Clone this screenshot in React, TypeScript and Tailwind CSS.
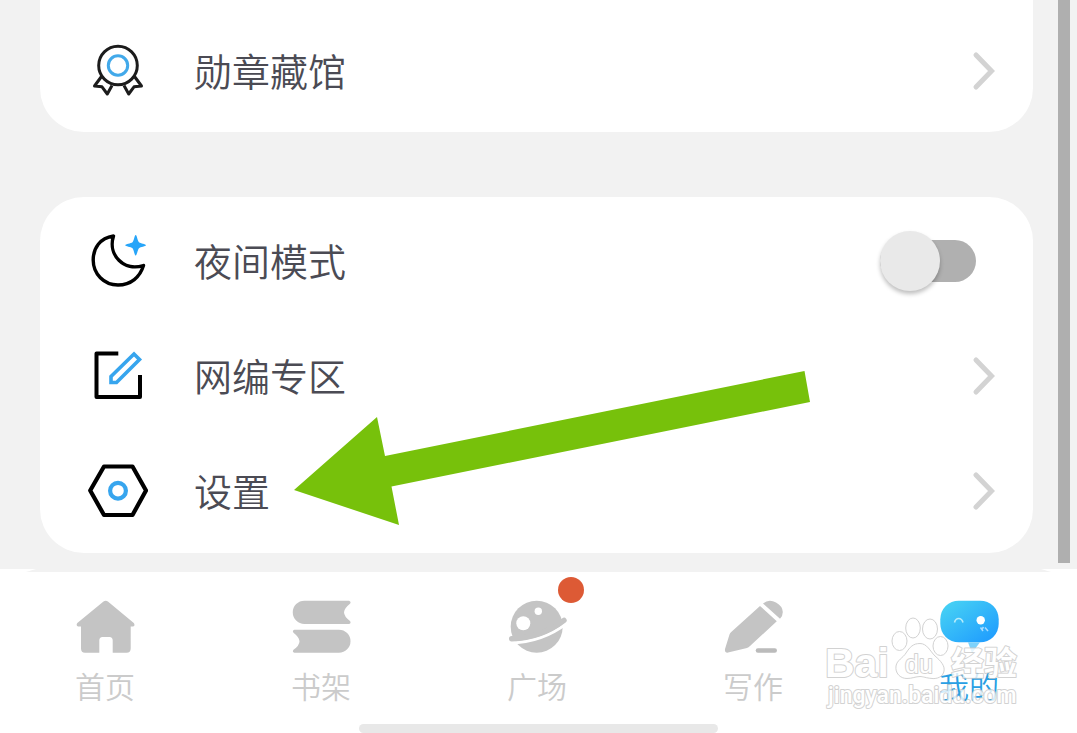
import React, { useState } from "react";

const MedalIcon = () => (
  <svg width="60" height="60" viewBox="0 0 60 60" fill="none" stroke="#1c1c1c" strokeWidth="3" strokeLinejoin="round">
    <path d="M13.5 35.5 6.5 45 14 45.8 19.3 53 24 44.5" />
    <path d="M46.5 35.5 53.5 45 46 45.8 40.7 53 36 44.5" />
    <circle cx="30" cy="24.5" r="19.3" fill="#fff" />
    <circle cx="30" cy="24.5" r="9.7" stroke="#42a9ea" />
  </svg>
);

const MoonIcon = () => (
  <svg width="60" height="60" viewBox="0 0 60 60" fill="none">
    <path
      d="M25.5 5C12 7 5.200 17 5.200 29 5.200 43 16 54 30 54 43 54 52 46 55.500 34.500 36 41 19.500 24 25.500 5Z"
      stroke="#000"
      strokeWidth="3.4"
      strokeLinejoin="round"
    />
    <path
      d="M47.700 4C49 4 49.500 10 51 11.300 52.500 12.600 57.900 13 57.900 14.300 57.900 15.600 52.500 15.800 51 17.200 49.500 18.500 49 24.500 47.700 24.500 46.400 24.500 46 18.500 44.500 17.200 43 15.800 37.300 15.600 37.300 14.300 37.300 13 43 12.600 44.500 11.300 46 10 46.400 4 47.700 4Z"
      fill="#27a5f9"
    />
  </svg>
);

const EditIcon = () => (
  <svg width="60" height="60" viewBox="0 0 60 60" fill="none" strokeWidth="4">
    <path d="M30.300 7.500H8.500V51H52V29" stroke="#000" strokeLinejoin="round" />
    <path d="M23 30.500V36.500H28.500L51.500 13.500 46 8Z" stroke="#37a5ee" strokeWidth="3.600" />
  </svg>
);

const HexagonIcon = () => (
  <svg width="60" height="60" viewBox="0 0 60 60" fill="none" strokeWidth="4.200">
    <path d="M2.200 29.500 16 5.500H44.500L58 29.500 44.500 54H16Z" stroke="#000" strokeLinejoin="round" />
    <circle cx="30" cy="29.700" r="7.900" stroke="#37a5ee" />
  </svg>
);

const HomeIcon = () => (
  <svg width="60" height="54" viewBox="0 0 60 54" fill="#c4c4c4">
    <path d="M28.500 1.600Q30.700 0 32.900 1.600L58.800 23Q60.500 25.800 58 26.500H55.700V48.500Q55.700 52.700 51.500 52.700H37.700V40.500Q37.700 37 34.500 37H27.500Q24.300 37 24.300 40.500V52.700H10Q6 52.700 6 48.500V26.500H3Q.7 25.500 2.300 23Z" />
  </svg>
);

const BooksIcon = () => (
  <svg width="60" height="54" viewBox="0 0 60 54" fill="#c4c4c4">
    <path d="M13.400.7H58Q60.500 1.500 59 3.700 53 8.500 53 12.300 53 16.500 59 21 60.500 23.300 58 24H13.400A11.650 11.650 0 0 1 13.400.7Z" />
    <path d="M48 29.700H3.400Q.9 30.500 2.500 32.700 8.500 37.500 8.500 41.200 8.500 45.500 2.500 49.700.9 52 3.400 52.700H48A11.500 11.500 0 0 0 48 29.700Z" />
  </svg>
);

const PlanetIcon = () => (
  <svg width="60" height="54" viewBox="0 0 60 54" fill="none" strokeLinecap="round">
    <circle cx="29.700" cy="26.700" r="26" fill="#c4c4c4" />
    <path d="M3 43Q36 42 60 23" stroke="#fff" strokeWidth="3" />
    <path d="M4.700 38.700Q34 38 57 20.300" stroke="#c4c4c4" strokeWidth="5.400" />
    <circle cx="16.300" cy="23.300" r="7" fill="#fff" />
    <circle cx="31.300" cy="11.300" r="3.700" fill="#fff" />
  </svg>
);

const PenIcon = () => (
  <svg width="60" height="54" viewBox="0 0 60 54" fill="#c4c4c4">
    <path d="M37 6 53.800 21.200 27 46Q25.500 47.500 24 48L5 52.600Q1.500 53 2 49L6.500 34.500Q7 33 8.500 31.700Z" />
    <path d="M40 3.500Q46-1.500 53 2.500 59.500 6 59.800 12 59.800 16 57 18.700Z" />
    <rect x="32.700" y="48.300" width="21.300" height="4.500" rx="2.200" fill="#bbb" />
  </svg>
);

const RobotIcon = () => (
  <svg width="60" height="54" viewBox="0 0 60 54" fill="none">
    <defs>
      <linearGradient id="robot" x1="0" y1="0" x2="1" y2="1">
        <stop offset="0" stopColor="#4ad6f3" />
        <stop offset="1" stopColor="#1c98ff" />
      </linearGradient>
    </defs>
    <rect x="1.300" y=".7" width="58.400" height="41.600" rx="18.500" fill="url(#robot)" />
    <path d="M29 42.300H41L33 53Z" fill="#7dd2fb" />
    <path d="M15.500 22.500Q16.500 18.500 19.700 18.500T24 22.500" stroke="#b5ecfb" strokeWidth="1.600" />
    <circle cx="41.700" cy="20.300" r="4.200" fill="#fff" />
    <path d="M41.500 27.500 44 31M46 27.500 49 31M44.500 27 42.500 30" stroke="#a9dcff" strokeWidth="1.500" />
  </svg>
);

const Chevron = () => (
  <svg width="24" height="40" viewBox="0 0 24 40" fill="none" className="mr-[38px]">
    <path d="M5 4 20.500 20 5 36" stroke="#d3d3d3" strokeWidth="5" strokeLinecap="round" />
  </svg>
);

// night mode switch
const Switch = () => {
  const [on, setOn] = useState(false);
  return (
    <button
      type="button"
      role="switch"
      aria-checked={on}
      aria-labelledby="night"
      onClick={() => setOn(!on)}
      className="flex items-center w-24 h-[60px] mr-[57px]"
    >
      <span className={`flex items-center w-full h-[42px] rounded-full ${on ? "bg-[#27a5f9] justify-end" : "bg-[#b0b0b0]"}`}>
        <span className="size-[60px] shrink-0 rounded-full bg-[#e9e9e9] shadow-[0_3px_4px_rgba(0,0,0,0.25)]" />
      </span>
    </button>
  );
};

const Label = ({ id, text }: { id?: string; text: string }) => (
  <span id={id} className="flex-1 pb-0.5 text-left text-[38px] leading-[56px] font-[350] text-[#4b4b54]">
    {text}
  </span>
);

const LinkRow = ({ icon, text }: { icon: React.ReactNode; text: string }) => (
  <a href="#" className="flex items-center h-[115px] pl-12 gap-[46px]">
    {icon}
    <Label text={text} />
    <Chevron />
  </a>
);

const tabs = [
  { text: "首页", icon: <HomeIcon /> },
  { text: "书架", icon: <BooksIcon /> },
  { text: "广场", icon: <PlanetIcon />, dot: true },
  { text: "写作", icon: <PenIcon /> },
  { text: "我的", icon: <RobotIcon />, active: true },
];

const Watermark = () => (
  <svg
    width="200"
    height="100"
    viewBox="0 0 200 100"
    className="absolute right-[55px] bottom-[18px] pointer-events-none opacity-80"
    fill="#fff"
    stroke="#c8c8c8"
    strokeWidth="1"
    strokeLinejoin="round"
  >
    <ellipse cx="77.500" cy="26" rx="7.500" ry="9.500" />
    <ellipse cx="91" cy="13" rx="7.300" ry="10" />
    <ellipse cx="108" cy="14" rx="7.500" ry="10" />
    <ellipse cx="118.500" cy="31" rx="7.500" ry="9.500" />
    <path d="M98 28.500C105 28.500 108 36 113 41 119 46 123 51 122 56 121 62 115 64 110 63.500 104 63 101 61.500 98 61.500 94 61.500 90 63.500 85 63.500 78 63.500 73 58 74 51 75 45 81 43 84 38 88 32 91 28.500 98 28.500Z" />
    <g className="[paint-order:stroke]" strokeWidth="2">
      <text x="3" y="62" fontSize="41" fontWeight="700" fontFamily="Liberation Sans, sans-serif">Bai</text>
      <text x="83" y="58" fontSize="25" fontFamily="Liberation Sans, sans-serif">du</text>
      <text x="129" y="60" fontSize="33" fontWeight="700" fontFamily="Noto Sans CJK SC, sans-serif">经验</text>
      <text x="6" y="88" fontSize="23" fontWeight="500" fontFamily="Roboto, sans-serif">jingyan.baidu.com</text>
    </g>
  </svg>
);

const TabBar = () => (
  <nav className="relative bg-white">
    <div className="h-[3px] mx-[26px] bg-[#f2f2f2] [clip-path:polygon(10px_0,calc(100%-10px)_0,100%_100%,0_100%)]" />
    <div className="flex justify-between pl-[75px] pr-[78px] pt-7">
      {tabs.map((tab) => (
        <a
          key={tab.text}
          href="#"
          className={`relative flex flex-col gap-[11px] text-[30px] leading-[40px] font-[350] ${
            tab.active ? "text-[#2a9fe3]" : "text-[#cbcbcb]"
          }`}
        >
          {tab.icon}
          {tab.text}
          {tab.dot && <span className="absolute -top-[23px] -right-[17px] size-[26px] rounded-full bg-[#dd5a35]" />}
        </a>
      ))}
    </div>
    <div className="w-1/3 h-[9px] mx-auto mt-[19px] rounded-full bg-[#e8e8e8]" />
    <Watermark />
  </nav>
);

const App = () => {
  return (
    <div className="flex flex-col min-h-screen bg-[#f2f2f2] overflow-hidden font-['Noto_Sans_CJK_SC',sans-serif]">
      <div className="flex flex-1">
        <main className="flex-1 pl-10 pb-4">
          <section className="pt-[13px] pb-1 mb-[65px] rounded-b-[44px] bg-white">
            <LinkRow icon={<MedalIcon />} text="勋章藏馆" />
          </section>
          <section className="relative pt-[6px] pb-[5px] rounded-[44px] bg-white">
            <div className="flex items-center h-[115px] pl-12 gap-[46px]">
              <MoonIcon />
              <Label id="night" text="夜间模式" />
              <Switch />
            </div>
            <LinkRow icon={<EditIcon />} text="网编专区" />
            <LinkRow icon={<HexagonIcon />} text="设置" />
            {/* arrow pointing at settings */}
            <svg
              width="516"
              height="154"
              viewBox="0 0 516 154"
              fill="#77c10b"
              className="absolute left-[254px] top-[174px] pointer-events-none"
            >
              <path d="M0 119 83 46 91 85 510.500 0 516 31 97.500 115.500 105 154Z" />
            </svg>
          </section>
        </main>
        {/* scroll bar */}
        <div className="w-3 ml-[25px] mr-[7px] mb-[6px] bg-[#afafaf]" />
      </div>
      <TabBar />
    </div>
  );
};

export default App;
